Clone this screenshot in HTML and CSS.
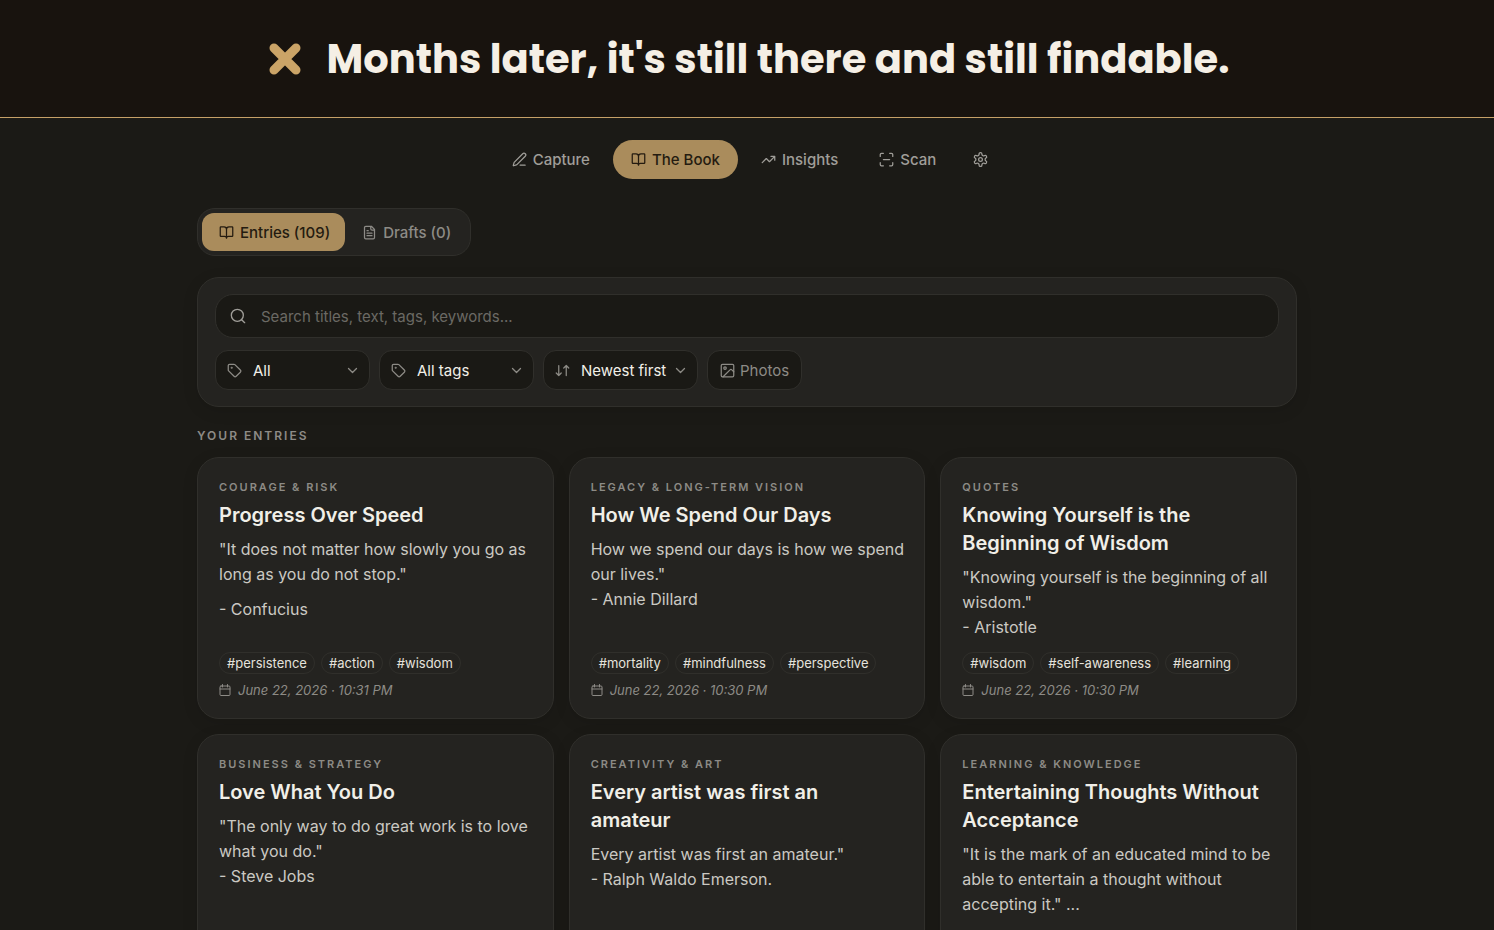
FILE: index.html
```html
<!DOCTYPE html>
<html lang="en">
<head>
<meta charset="utf-8">
<meta name="viewport" content="width=device-width, initial-scale=1">
<title>The Book</title>
<link rel="stylesheet" href="styles.css">
</head>
<body>
<svg class="sprite" aria-hidden="true">
  <symbol id="pen" viewBox="0 0 24 24"><path d="M13 21h8M21.174 6.812a1 1 0 0 0-3.986-3.987L3.842 16.174a2 2 0 0 0-.5.83l-1.321 4.352a.5.5 0 0 0 .623.622l4.353-1.32a2 2 0 0 0 .83-.497z"/></symbol>
  <symbol id="book" viewBox="0 0 24 24"><path d="M12 7v14M3 18a1 1 0 0 1-1-1V4a1 1 0 0 1 1-1h5a4 4 0 0 1 4 4 4 4 0 0 1 4-4h5a1 1 0 0 1 1 1v13a1 1 0 0 1-1 1h-6a3 3 0 0 0-3 3 3 3 0 0 0-3-3z"/></symbol>
  <symbol id="trend" viewBox="0 0 24 24"><path d="M16 7h6v6M22 7l-8.5 8.5-5-5L2 17"/></symbol>
  <symbol id="scan" viewBox="0 0 24 24"><path d="M2 7V4a2 2 0 0 1 2-2h3M17 2h3a2 2 0 0 1 2 2v3M22 17v3a2 2 0 0 1-2 2h-3M7 22H4a2 2 0 0 1-2-2v-3M7 12h10"/></symbol>
  <symbol id="gear" viewBox="0 0 24 24"><path d="M12.22 1h-.44a2 2 0 0 0-2 2v.7a2 2 0 0 1-1 1.73l-.9.52a2 2 0 0 1-2 0l-.5-.28a2 2 0 0 0-2.73.73l-.22.38a2 2 0 0 0 .73 2.73l.4.25a2 2 0 0 1 1 1.72v1.04a2 2 0 0 1-1 1.72l-.4.25a2 2 0 0 0-.73 2.73l.22.38a2 2 0 0 0 2.73.73l.5-.28a2 2 0 0 1 2 0l.9.52a2 2 0 0 1 1 1.73v.7a2 2 0 0 0 2 2h.44a2 2 0 0 0 2-2v-.7a2 2 0 0 1 1-1.73l.9-.52a2 2 0 0 1 2 0l.5.28a2 2 0 0 0 2.73-.73l.22-.38a2 2 0 0 0-.73-2.73l-.4-.25a2 2 0 0 1-1-1.72v-1.04a2 2 0 0 1 1-1.72l.4-.25a2 2 0 0 0 .73-2.73l-.22-.38a2 2 0 0 0-2.73-.73l-.5.28a2 2 0 0 1-2 0l-.9-.52a2 2 0 0 1-1-1.73V3a2 2 0 0 0-2-2z"/><circle cx="12" cy="12" r="3"/></symbol>
  <symbol id="file" viewBox="0 0 24 24"><path d="M15 2H6a2 2 0 0 0-2 2v16a2 2 0 0 0 2 2h12a2 2 0 0 0 2-2V7zM14 2v4a2 2 0 0 0 2 2h4M10 9H8M16 13H8M16 17H8"/></symbol>
  <symbol id="search" viewBox="0 0 24 24"><circle cx="11" cy="11" r="9"/><path d="m22 22-4.5-4.5"/></symbol>
  <symbol id="tag" viewBox="0 0 24 24"><path d="M12.586 2.586A2 2 0 0 0 11.172 2H4a2 2 0 0 0-2 2v7.172a2 2 0 0 0 .586 1.414l8.704 8.704a2.426 2.426 0 0 0 3.42 0l6.58-6.58a2.426 2.426 0 0 0 0-3.42z"/><circle cx="7.500" cy="7.500" r=".7"/></symbol>
  <symbol id="sort" viewBox="0 0 24 24"><path d="m2 16 4 4 4-4M6 20V4M14 8l4-4 4 4M18 4v16"/></symbol>
  <symbol id="down" viewBox="0 0 11 11"><path d="m1.500 3.500 4 4 4-4"/></symbol>
  <symbol id="image" viewBox="0 0 24 24"><rect x="2" y="2" width="20" height="20" rx="2"/><circle cx="8" cy="8" r="2"/><path d="m22 14-3-3a2 2 0 0 0-3 0L5 22"/></symbol>
  <symbol id="cal" viewBox="0 0 24 24"><path d="M7 1v5M17 1v5M2 10h20"/><rect x="2" y="4" width="20" height="19" rx="2"/></symbol>
</svg>

<header class="banner">
  <svg class="banner-mark" viewBox="0 0 32 32" aria-hidden="true"><path d="M5 5l22 22M27 5L5 27"/></svg>
  <h1 class="banner-title">Months later, it's still there and still findable.</h1>
</header>

<nav class="nav" aria-label="Main">
  <a class="nav-link" href="#capture"><svg class="icon"><use href="#pen"/></svg>Capture</a>
  <a class="nav-link is-active" href="#book-page" aria-current="page"><svg class="icon"><use href="#book"/></svg>The Book</a>
  <a class="nav-link" href="#insights"><svg class="icon"><use href="#trend"/></svg>Insights</a>
  <a class="nav-link" href="#scan-page"><svg class="icon"><use href="#scan"/></svg>Scan</a>
  <a class="nav-link nav-settings" href="#settings" aria-label="Settings"><svg class="icon"><use href="#gear"/></svg></a>
</nav>

<main class="page">
  <div class="tabs">
    <button class="tab is-active" type="button"><svg class="icon"><use href="#book"/></svg>Entries (109)</button>
    <button class="tab" type="button"><svg class="icon"><use href="#file"/></svg>Drafts (0)</button>
  </div>

  <section class="filters" aria-label="Filters">
    <label class="search">
      <svg class="icon"><use href="#search"/></svg>
      <input class="search-input" type="text" aria-label="Search entries" placeholder="Search titles, text, tags, keywords...">
    </label>
    <div class="filter-row">
      <label class="picker"><svg class="icon"><use href="#tag"/></svg><select class="picker-select" aria-label="Category"><option>All</option></select><svg class="icon chevron"><use href="#down"/></svg></label>
      <label class="picker"><svg class="icon"><use href="#tag"/></svg><select class="picker-select" aria-label="Tag"><option>All tags</option></select><svg class="icon chevron"><use href="#down"/></svg></label>
      <label class="picker"><svg class="icon"><use href="#sort"/></svg><select class="picker-select" aria-label="Sort order"><option>Newest first</option></select><svg class="icon chevron"><use href="#down"/></svg></label>
      <button class="photos" type="button"><svg class="icon"><use href="#image"/></svg>Photos</button>
    </div>
  </section>

  <h2 class="section-title">Your entries</h2>

  <section class="grid">
    <article class="card">
      <p class="category">Courage &amp; Risk</p>
      <h3 class="title">Progress Over Speed</h3>
      <div class="text"><p>"It does not matter how slowly you go as long as you do not stop."</p><p>- Confucius</p></div>
      <div class="tags"><span class="tag">#persistence</span><span class="tag">#action</span><span class="tag">#wisdom</span></div>
      <p class="date"><svg class="icon"><use href="#cal"/></svg>June 22, 2026 · 10:31 PM</p>
    </article>
    <article class="card">
      <p class="category">Legacy &amp; Long-Term Vision</p>
      <h3 class="title">How We Spend Our Days</h3>
      <div class="text"><p>How we spend our days is how we spend our lives."<br>- Annie Dillard</p></div>
      <div class="tags"><span class="tag">#mortality</span><span class="tag">#mindfulness</span><span class="tag">#perspective</span></div>
      <p class="date"><svg class="icon"><use href="#cal"/></svg>June 22, 2026 · 10:30 PM</p>
    </article>
    <article class="card">
      <p class="category">Quotes</p>
      <h3 class="title">Knowing Yourself is the Beginning of Wisdom</h3>
      <div class="text"><p>"Knowing yourself is the beginning of all wisdom."<br>- Aristotle</p></div>
      <div class="tags"><span class="tag">#wisdom</span><span class="tag">#self-awareness</span><span class="tag">#learning</span></div>
      <p class="date"><svg class="icon"><use href="#cal"/></svg>June 22, 2026 · 10:30 PM</p>
    </article>
    <article class="card">
      <p class="category">Business &amp; Strategy</p>
      <h3 class="title">Love What You Do</h3>
      <div class="text"><p>"The only way to do great work is to love what you do."<br>- Steve Jobs</p></div>
    </article>
    <article class="card">
      <p class="category">Creativity &amp; Art</p>
      <h3 class="title">Every artist was first an amateur</h3>
      <div class="text"><p>Every artist was first an amateur."<br>- Ralph Waldo Emerson.</p></div>
    </article>
    <article class="card">
      <p class="category">Learning &amp; Knowledge</p>
      <h3 class="title">Entertaining Thoughts Without Acceptance</h3>
      <div class="text"><p>"It is the mark of an educated mind to be able to entertain a thought without accepting it." ...</p></div>
    </article>
  </section>
</main>
</body>
</html>
```
FILE: styles.css
```css
:root {
  --bg: #1b1a16;
  --surface: #242320;
  --field: #1a1915;
  --line: #302f2b;
  --gold: #aa8c5c;
  --ink: #f1efe8;
  --body: #cbc9c3;
  --muted: #8d8b86;
}

* { box-sizing: border-box; }

body {
  margin: 0;
  background: var(--bg);
  color: var(--ink);
  font-family: Inter, "Liberation Sans", sans-serif;
  font-size: 15px;
}

h1, h2, h3, p { margin: 0; }

button, input, select { font: inherit; color: inherit; }

.sprite { display: none; }

.icon {
  flex: none;
  width: 15px;
  height: 15px;
  fill: none;
  stroke: currentColor;
  stroke-width: 2;
  stroke-linecap: round;
  stroke-linejoin: round;
}

.banner {
  display: flex;
  align-items: center;
  justify-content: center;
  gap: 26px;
  padding: 29px 22px 28px 26px;
  background: #18130e;
  border-bottom: 1px solid #c5a067;
}

.banner-mark {
  flex: none;
  width: 32px;
  height: 32px;
  fill: none;
  stroke: #cba467;
  stroke-width: 9;
  stroke-linecap: round;
}

.banner-title {
  color: #f5efe5;
  font-family: Poppins, Inter, sans-serif;
  font-size: 40px;
  font-weight: 700;
  line-height: 60px;
}

.nav {
  display: flex;
  justify-content: center;
  gap: 5px;
  padding: 22px 16px 0;
}

.nav-link {
  display: flex;
  align-items: center;
  gap: 6px;
  height: 39px;
  padding: 0 18px;
  border-radius: 20px;
  color: #a09e99;
  font-weight: 500;
  text-decoration: none;
}

.nav-settings { padding: 0 12px 0 14px; }

.nav-link.is-active, .tab.is-active {
  background: var(--gold);
  color: #241b10;
}

.page {
  max-width: 1132px;
  margin: 0 auto;
  padding: 29px 16px 32px;
}

.tabs {
  display: inline-flex;
  padding: 4px;
  border: 1px solid var(--line);
  border-radius: 18px;
  background: var(--surface);
  vertical-align: top;
}

.tab {
  display: flex;
  align-items: center;
  gap: 6px;
  height: 38px;
  padding: 0 15px 0 17px;
  border: 0;
  border-radius: 12px;
  background: none;
  color: var(--muted);
  font-weight: 500;
}

.filters {
  display: grid;
  gap: 12px;
  margin-top: 21px;
  padding: 16px 17px;
  border: 1px solid var(--line);
  border-radius: 22px;
  background: var(--surface);
  box-shadow: 0 4px 16px rgba(0, 0, 0, 0.1);
}

.search {
  display: flex;
  align-items: center;
  gap: 15px;
  height: 44px;
  padding: 0 14px;
  border: 1px solid var(--line);
  border-radius: 18px;
  background: var(--field);
  color: #a09e99;
}

.search .icon { width: 16px; height: 16px; }

.search-input {
  flex: 1;
  min-width: 0;
  padding: 0;
  border: 0;
  outline: 0;
  background: none;
  color: var(--ink);
}

.search-input::placeholder { color: #6b6964; opacity: 1; }

.filter-row {
  display: flex;
  flex-wrap: wrap;
  gap: 9px;
}

.picker, .photos {
  display: flex;
  align-items: center;
  height: 40px;
  border: 1px solid var(--line);
  border-radius: 13px;
  background: var(--field);
  color: var(--muted);
}

.picker {
  gap: 11px;
  width: 155px;
  padding: 0 11px;
}

.picker-select {
  flex: 1;
  min-width: 0;
  margin-right: -4px;
  padding: 0;
  border: 0;
  outline: 0;
  appearance: none;
  background: none;
  color: var(--ink);
}

.chevron {
  width: 11px;
  height: 11px;
  stroke-width: 1.3;
}

.photos {
  gap: 5px;
  padding: 0 12px;
}

.section-title {
  margin: 21px 0 13px;
  color: var(--muted);
  font-size: 12px;
  font-weight: 600;
  line-height: 16px;
  letter-spacing: 2px;
  text-transform: uppercase;
}

.grid {
  display: grid;
  grid-template-columns: repeat(auto-fit, minmax(300px, 1fr));
  gap: 15px;
}

.card {
  display: flex;
  flex-direction: column;
  min-height: 262px;
  padding: 21px 16px 20px 21px;
  border: 1px solid var(--line);
  border-radius: 22px;
  background: var(--surface);
  box-shadow: 0 4px 16px rgba(0, 0, 0, 0.1);
}

.category {
  color: var(--muted);
  font-size: 11px;
  font-weight: 600;
  line-height: 16px;
  letter-spacing: 2px;
  text-transform: uppercase;
}

.title {
  margin-top: 6px;
  padding-right: 8px;
  font-size: 20px;
  font-weight: 600;
  line-height: 28px;
}

.text {
  display: grid;
  gap: 10px;
  margin: 8px 0 12px;
  color: var(--body);
  font-size: 16px;
  line-height: 25px;
}

.tags {
  display: flex;
  flex-wrap: wrap;
  gap: 6px;
  margin-top: auto;
}

.tag {
  padding: 0 7px;
  border: 1px solid var(--line);
  border-radius: 11px;
  color: #e4e2dc;
  font-size: 13px;
  line-height: 20px;
}

.date {
  display: flex;
  align-items: center;
  gap: 7px;
  margin-top: 8px;
  color: var(--muted);
  font-size: 13px;
  font-style: italic;
  line-height: 16px;
}

.date .icon { width: 12px; height: 12px; }
```
